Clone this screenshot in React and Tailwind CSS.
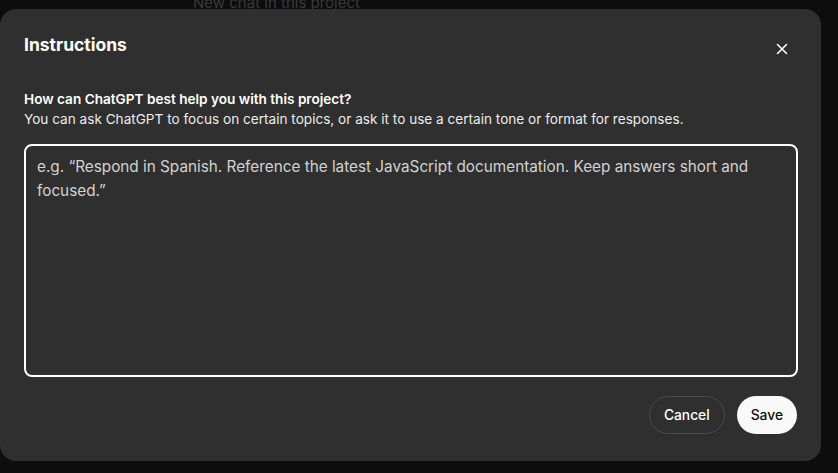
import React from 'react';

const App = () => {
  return (
    <div className="w-[838px] h-[473px] bg-[#0d0d0d] overflow-hidden font-['Inter',sans-serif] relative">
      {/* page behind the modal */}
      <div className="absolute left-[193px] -top-[8px] text-[15px] text-[#3a3a3a]">New chat in this project</div>

      <div className="absolute left-0 top-[9px] w-[821px] h-[452px] bg-[#2f2f2f] rounded-[16px] flex flex-col px-6 pt-[24px]">
        <div className="flex items-start justify-between">
          <h2 className="text-[17.5px] font-bold text-white leading-6">Instructions</h2>
          <button className="mt-[10px] mr-[9px] text-white">
            <svg width="12" height="12" viewBox="0 0 12 12" fill="none" stroke="currentColor" strokeWidth="1.6" strokeLinecap="round">
              <path d="M1.5 1.5L10.5 10.5M10.5 1.5L1.5 10.5" />
            </svg>
          </button>
        </div>

        <div className="mt-[32px] text-[13.6px] leading-[20px]">
          <p className="font-semibold text-white">How can ChatGPT best help you with this project?</p>
          <p className="text-[#ececec]">You can ask ChatGPT to focus on certain topics, or ask it to use a certain tone or format for responses.</p>
        </div>

        <textarea
          className="mt-[15px] w-[774px] h-[233px] rounded-[8px] border-2 border-white bg-[#2f2f2f] px-[11px] py-[9px] text-[15.3px] leading-[24px] text-white placeholder:text-[#d2d2d2] outline-none resize-none"
          placeholder="e.g. “Respond in Spanish. Reference the latest JavaScript documentation. Keep answers short and focused.”"
        />

        <div className="flex justify-end gap-3 mt-[19px] w-[773px]">
          <button className="h-[38px] px-[14px] rounded-full border border-[#4b4b4b] text-white text-[13.8px] font-medium">Cancel</button>
          <button className="h-[38px] px-[14px] rounded-full bg-[#f9f9f9] text-[#0d0d0d] text-[13.8px] font-medium">Save</button>
        </div>
      </div>
    </div>
  );
};

export default App;
